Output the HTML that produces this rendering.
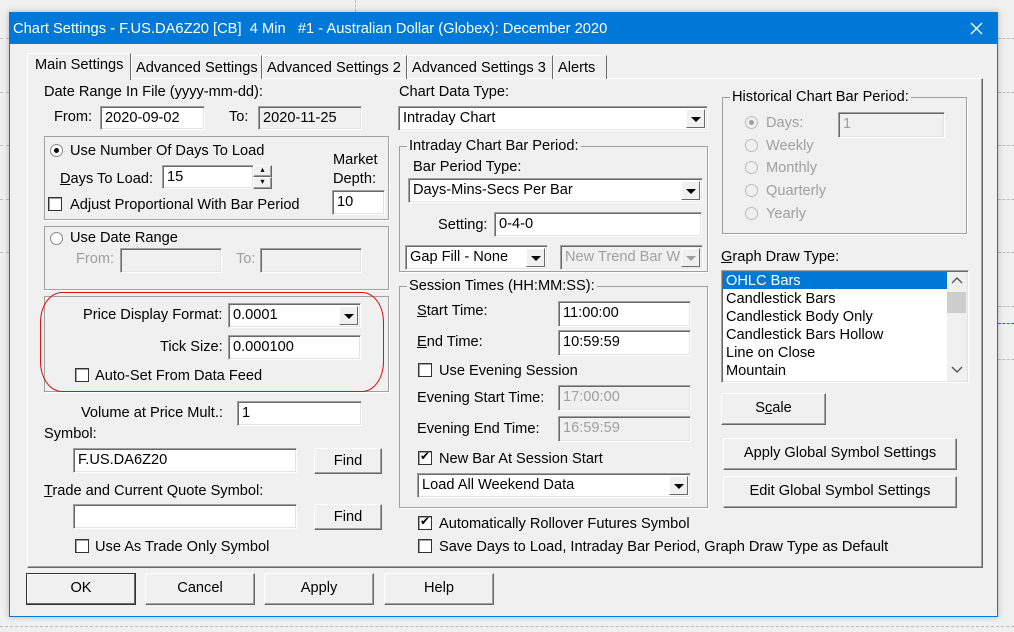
<!DOCTYPE html>
<html><head><meta charset="utf-8"><style>
*{box-sizing:border-box;margin:0;padding:0}
body{width:1014px;height:632px;position:relative;background:#f0f0f0;font-family:"Liberation Sans",Arial,sans-serif;font-size:14.6px;color:#000;overflow:hidden}
div,span{position:absolute}
.t{line-height:16px;white-space:nowrap}
.g{color:#a0a0a0}
.in{background:#fff;border-top:1px solid #a0a0a0;border-left:1px solid #a0a0a0;border-bottom:1px solid #fff;border-right:1px solid #fff;box-shadow:inset 1px 1px 0 #696969,inset -1px -1px 0 #e3e3e3;padding:3px 0 0 4px;line-height:16px;white-space:nowrap;overflow:hidden}
.dis{background:#f0f0f0;color:#a0a0a0}
.btn{background:#f0f0f0;border-top:1px solid #fff;border-left:1px solid #fff;border-right:1px solid #696969;border-bottom:1px solid #696969;box-shadow:inset -1px -1px 0 #a0a0a0;text-align:center;line-height:29px}
.dd{width:19px;top:2px;right:2px;bottom:2px;background:#f0f0f0;border-top:1px solid #fff;border-left:1px solid #fff;border-right:1px solid #696969;border-bottom:1px solid #696969}
.dd:after{content:"";position:absolute;left:4px;top:7px;border-left:5px solid transparent;border-right:5px solid transparent;border-top:5px solid #000}
.dd.gd:after{border-top-color:#a0a0a0}
.gb{border:1px solid #a0a0a0;box-shadow:1px 1px 0 #fff}
.gt{background:#f0f0f0;padding:0 2px;line-height:16px;white-space:nowrap}
.cb{width:14px;height:14px;background:#fff;border:1px solid #333;box-shadow:inset 1px 1px 0 #a0a0a0}
.ck:after{content:"✔";position:absolute;left:1px;top:-3px;font-size:12px}
.rb{width:13px;height:13px;border-radius:50%;background:#fff;border:1px solid #888}
.rb.on:after{content:"";position:absolute;left:3px;top:3px;width:5px;height:5px;border-radius:50%;background:#000}
.rb.gr{background:#f0f0f0;border-color:#bbb}
.rb.gr.on:after{background:#a0a0a0}
.tab{top:55px;height:24px;border:1px solid #fff;border-right-color:#696969;border-bottom:none;padding:4px 0 0 4px;line-height:16px;white-space:nowrap}
u{text-decoration:underline}
</style></head><body>
<div style="left:998px;top:38px;width:16px;border-top:1px dashed #bbb"></div>
<div style="left:998px;top:92px;width:16px;border-top:1px dashed #bbb"></div>
<div style="left:998px;top:145px;width:16px;border-top:1px dashed #bbb"></div>
<div style="left:998px;top:199px;width:16px;border-top:1px dashed #bbb"></div>
<div style="left:998px;top:252px;width:16px;border-top:1px dashed #bbb"></div>
<div style="left:998px;top:306px;width:16px;border-top:1px dashed #bbb"></div>
<div style="left:998px;top:323px;width:16px;border-top:1px dashed #3060e0"></div>
<div style="left:998px;top:359px;width:16px;border-top:1px dashed #bbb"></div>
<div style="left:0;top:626px;width:1014px;border-top:1px dashed #bbb"></div>
<div style="left:355px;top:0;height:12px;border-left:1px dashed #bbb"></div>
<div style="left:0;top:38px;width:9px;border-top:1px dashed #bbb"></div>
<div style="left:0;top:92px;width:9px;border-top:1px dashed #bbb"></div>
<div style="left:0;top:145px;width:9px;border-top:1px dashed #bbb"></div>
<div style="left:0;top:199px;width:9px;border-top:1px dashed #bbb"></div>
<div style="left:0;top:252px;width:9px;border-top:1px dashed #bbb"></div>
<div style="left:9px;top:12px;width:989px;height:605px;background:#f0f0f0;border:1px solid #0078d7;box-shadow:0 0 6px rgba(0,0,0,.25)"></div>
<div style="left:9px;top:12px;width:989px;height:32px;background:#0078d7;color:#fff"></div>
<div class="t" style="left:13px;top:20px;color:#fff;font-size:14.7px;line-height:18px">Chart Settings - F.US.DA6Z20 [CB]&nbsp; 4 Min &nbsp; #1 - Australian Dollar (Globex): December 2020</div>
<svg style="position:absolute;left:970px;top:22px" width="13" height="13"><path d="M1 1L12 12M12 1L1 12" stroke="#fff" stroke-width="1.3"/></svg>
<div style="left:27px;top:78px;width:956px;height:490px;border-top:1px solid #fff;border-left:1px solid #fff;border-right:1px solid #696969;border-bottom:1px solid #696969;box-shadow:inset -1px -1px 0 #a0a0a0"></div>
<div class="tab" style="left:131px;width:131px">Advanced Settings</div>
<div class="tab" style="left:262px;width:145px">Advanced Settings 2</div>
<div class="tab" style="left:407px;width:146px">Advanced Settings 3</div>
<div class="tab" style="left:553px;width:54px">Alerts</div>
<div class="tab" style="left:27px;top:53px;width:104px;height:27px;background:#f0f0f0;padding:3px 0 0 7px">Main Settings</div>
<div class="t" style="left:44px;top:84px">Date Range In File (yyyy-mm-dd):</div>
<div class="t" style="left:54px;top:109px">From:</div>
<div class="in" style="left:100px;top:106px;width:105px;height:24px">2020-09-02</div>
<div class="t" style="left:229px;top:109px">To:</div>
<div class="in dis" style="left:258px;top:106px;width:104px;height:24px;color:#000">2020-11-25</div>
<div class="gb" style="left:44px;top:136px;width:345px;height:84px"></div>
<div class="rb on" style="left:50px;top:144px"></div>
<div class="t" style="left:70px;top:143px">Use Number Of Days To Load</div>
<div class="t" style="left:333px;top:152px">Market</div>
<div class="t" style="left:333px;top:171px">Depth:</div>
<div class="t" style="left:60px;top:171px"><u>D</u>ays To Load:</div>
<div class="in" style="left:162px;top:165px;width:92px;height:24px">15</div>
<div class="btn" style="left:253px;top:165px;width:19px;height:12px;line-height:8px;font-size:8px">▴</div>
<div class="btn" style="left:253px;top:177px;width:19px;height:12px;line-height:8px;font-size:8px">▾</div>
<div class="in" style="left:332px;top:190px;width:53px;height:25px">10</div>
<div class="cb" style="left:48px;top:197px"></div>
<div class="t" style="left:70px;top:197px">Adjust Proportional With Bar Period</div>
<div class="gb" style="left:44px;top:226px;width:345px;height:64px"></div>
<div class="rb" style="left:50px;top:232px"></div>
<div class="t" style="left:70px;top:230px">Use Date Range</div>
<div class="t g" style="left:76px;top:251px">From:</div>
<div class="in dis" style="left:120px;top:248px;width:102px;height:25px"></div>
<div class="t g" style="left:236px;top:251px">To:</div>
<div class="in dis" style="left:260px;top:248px;width:102px;height:25px"></div>
<div class="gb" style="left:44px;top:296px;width:345px;height:96px"></div>
<div style="left:40px;top:292px;width:344px;height:100px;border:1.5px solid #e01010;border-radius:22px/30px"></div>
<div class="t" style="left:83px;top:307px">Price Display Format:</div>
<div class="in" style="left:228px;top:303px;width:133px;height:25px">0.0001<div class="dd"></div></div>
<div class="t" style="left:160px;top:339px">Tick Size:</div>
<div class="in" style="left:228px;top:335px;width:133px;height:25px">0.000100</div>
<div class="cb" style="left:75px;top:368px"></div>
<div class="t" style="left:95px;top:368px">Auto-Set From Data Feed</div>
<div class="t" style="left:81px;top:405px">Volume at Price Mult.:</div>
<div class="in" style="left:237px;top:401px;width:125px;height:25px">1</div>
<div class="t" style="left:44px;top:426px">Symbol:</div>
<div class="in" style="left:73px;top:448px;width:224px;height:25px">F.US.DA6Z20</div>
<div class="btn" style="left:314px;top:448px;width:68px;height:26px;line-height:24px">Find</div>
<div class="t" style="left:44px;top:483px"><u>T</u>rade and Current Quote Symbol:</div>
<div class="in" style="left:73px;top:504px;width:224px;height:25px"></div>
<div class="btn" style="left:314px;top:504px;width:68px;height:26px;line-height:24px">Find</div>
<div class="cb" style="left:75px;top:539px"></div>
<div class="t" style="left:95px;top:539px">Use As Trade Only Symbol</div>
<div class="t" style="left:399px;top:84px">Chart Data Type:</div>
<div class="in" style="left:398px;top:106px;width:310px;height:25px">Intraday Chart<div class="dd"></div></div>
<div class="gb" style="left:399px;top:146px;width:309px;height:126px"></div>
<div class="t gt" style="left:407px;top:138px">Intraday Chart Bar Period:</div>
<div class="t" style="left:413px;top:159px">Bar Period Type:</div>
<div class="in" style="left:408px;top:178px;width:295px;height:25px">Days-Mins-Secs Per Bar<div class="dd"></div></div>
<div class="t" style="left:438px;top:217px">Setting:</div>
<div class="in" style="left:494px;top:212px;width:208px;height:25px">0-4-0</div>
<div class="in" style="left:405px;top:245px;width:143px;height:25px">Gap Fill - None<div class="dd"></div></div>
<div class="in dis" style="left:560px;top:245px;width:143px;height:25px">New Trend Bar W<div class="dd gd"></div></div>
<div class="gb" style="left:399px;top:286px;width:309px;height:222px"></div>
<div class="t gt" style="left:407px;top:278px">Session Times (HH:MM:SS):</div>
<div class="t" style="left:417px;top:303px"><u>S</u>tart Time:</div>
<div class="in" style="left:558px;top:301px;width:133px;height:26px">11:00:00</div>
<div class="t" style="left:417px;top:334px"><u>E</u>nd Time:</div>
<div class="in" style="left:558px;top:330px;width:133px;height:26px">10:59:59</div>
<div class="cb" style="left:418px;top:363px"></div>
<div class="t" style="left:439px;top:363px">Use Evening Session</div>
<div class="t" style="left:417px;top:390px">Evening Start Time:</div>
<div class="in dis" style="left:558px;top:385px;width:133px;height:26px">17:00:00</div>
<div class="t" style="left:417px;top:421px">Evening End Time:</div>
<div class="in dis" style="left:558px;top:416px;width:133px;height:26px">16:59:59</div>
<div class="cb ck" style="left:418px;top:451px"></div>
<div class="t" style="left:439px;top:451px">New Bar At Session Start</div>
<div class="in" style="left:417px;top:473px;width:274px;height:25px">Load All Weekend Data<div class="dd"></div></div>
<div class="cb ck" style="left:418px;top:516px"></div>
<div class="t" style="left:439px;top:516px">Automatically Rollover Futures Symbol</div>
<div class="cb" style="left:418px;top:539px"></div>
<div class="t" style="left:439px;top:539px">Save Days to Load, Intraday Bar Period, Graph Draw Type as Default</div>
<div class="gb" style="left:722px;top:97px;width:245px;height:137px"></div>
<div class="t gt" style="left:730px;top:89px">Historical Chart Bar Period:</div>
<div class="rb gr on" style="left:745px;top:116px"></div><div class="t g" style="left:766px;top:115px">Days:</div>
<div class="in dis" style="left:838px;top:112px;width:107px;height:26px">1</div>
<div class="rb gr" style="left:745px;top:139px"></div><div class="t g" style="left:766px;top:138px">Weekly</div>
<div class="rb gr" style="left:745px;top:161px"></div><div class="t g" style="left:766px;top:160px">Monthly</div>
<div class="rb gr" style="left:745px;top:184px"></div><div class="t g" style="left:766px;top:183px">Quarterly</div>
<div class="rb gr" style="left:745px;top:207px"></div><div class="t g" style="left:766px;top:206px">Yearly</div>
<div class="t" style="left:721px;top:249px"><u>G</u>raph Draw Type:</div>
<div class="in" style="left:721px;top:270px;width:248px;height:113px;padding:0"></div>
<div style="left:723px;top:272px;width:224px;height:17px;background:#0078d7"></div>
<div class="t" style="left:726px;top:273px;color:#fff">OHLC Bars</div>
<div class="t" style="left:726px;top:291px">Candlestick Bars</div>
<div class="t" style="left:726px;top:309px">Candlestick Body Only</div>
<div class="t" style="left:726px;top:327px">Candlestick Bars Hollow</div>
<div class="t" style="left:726px;top:345px">Line on Close</div>
<div class="t" style="left:726px;top:363px">Mountain</div>
<div style="left:947px;top:272px;width:20px;height:109px;background:#f0f0f0"></div>
<div style="left:947px;top:292px;width:19px;height:21px;background:#cdcdcd"></div>
<svg style="position:absolute;left:951px;top:277px" width="12" height="8"><path d="M1 6L6 1L11 6" stroke="#555" fill="none" stroke-width="1.4"/></svg>
<svg style="position:absolute;left:951px;top:366px" width="12" height="8"><path d="M1 1L6 6L11 1" stroke="#555" fill="none" stroke-width="1.4"/></svg>
<div class="btn" style="left:721px;top:393px;width:105px;height:32px">S<u>c</u>ale</div>
<div class="btn" style="left:723px;top:438px;width:234px;height:32px">Apply Global Symbol Settings</div>
<div class="btn" style="left:723px;top:476px;width:234px;height:32px">Edit Global Symbol Settings</div>
<div class="btn" style="left:26px;top:573px;width:110px;height:32px;border:1px solid #333;box-shadow:inset -1px -1px 0 #696969,inset 1px 1px 0 #fff">OK</div>
<div class="btn" style="left:145px;top:573px;width:110px;height:32px">Cancel</div>
<div class="btn" style="left:264px;top:573px;width:110px;height:32px">Apply</div>
<div class="btn" style="left:384px;top:573px;width:110px;height:32px">Help</div>
</body></html>
